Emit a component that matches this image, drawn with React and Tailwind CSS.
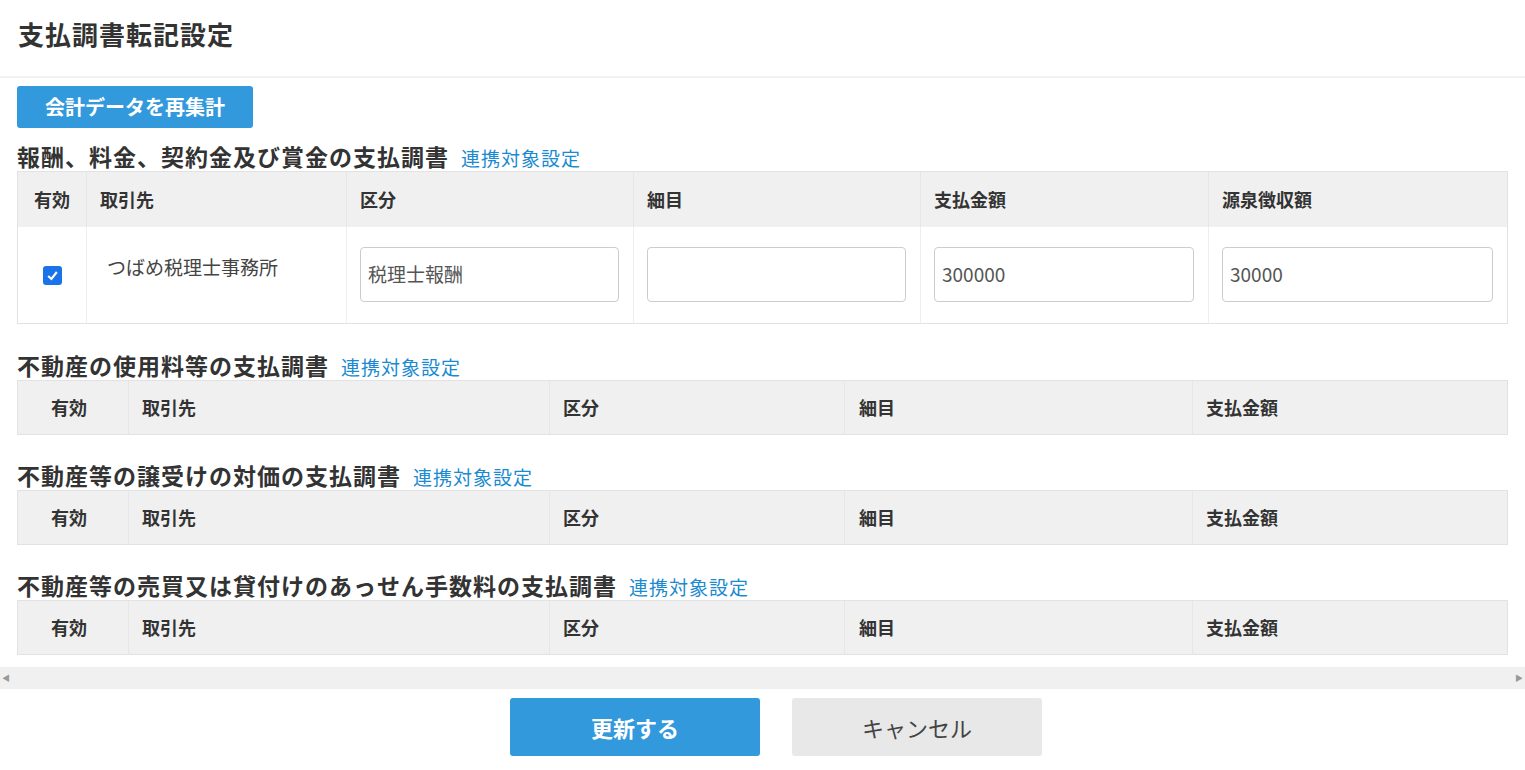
const F = { fontFamily: '"Noto Sans CJK JP", "Liberation Sans", sans-serif' };

function Head({ title, mt }) {
  return (
    <div className={`flex items-end h-[29px] ${mt}`}>
      <span className="text-[23px] font-bold text-[#333] leading-[30px] tracking-[1px]">{title}</span>
      <span className="ml-3 text-[19px] text-[#1a8ad1] leading-[26px] tracking-[1px]">連携対象設定</span>
    </div>
  );
}

function SmallTable() {
  const cols = [
    ['w-[110px] pl-[33px]', '有効'],
    ['w-[421px] pl-[13px]', '取引先'],
    ['w-[295px] pl-[13px]', '区分'],
    ['w-[348px] pl-[14px]', '細目'],
    ['flex-1 pl-[13px]', '支払金額'],
  ];
  return (
    <div className="mx-[17px] flex h-[55px] bg-[#f0f0f0] border border-[#e2e2e2]">
      {cols.map(([c, t], i) => (
        <div key={i} className={`${c} flex items-center text-[18px] font-bold text-[#333] ${i ? 'border-l border-[#e6e6e6]' : ''}`}>{t}</div>
      ))}
    </div>
  );
}

export default function App() {
  const ws = ['w-[68px] justify-center', 'w-[260px] pl-[13px]', 'w-[287px] pl-[13px]', 'w-[287px] pl-[13px]', 'w-[288px] pl-[13px]', 'flex-1 pl-[13px]'];
  const hd = ['有効', '取引先', '区分', '細目', '支払金額', '源泉徴収額'];
  const inputs = ['税理士報酬', '', '300000', '30000'];
  return (
    <div style={F} className="w-[1525px] h-[770px] bg-white text-[#333] overflow-hidden">
      <div className="h-[78px] border-b-2 border-[#f2f2f2] px-[18px] pt-[14px] text-[26px] font-bold tracking-[1px]">支払調書転記設定</div>
      <div className="px-[17px] pt-[8px]">
        <button className="w-[236px] h-[42px] bg-[#3399dd] rounded-[3px] text-white text-[20px] font-bold">会計データを再集計</button>
      </div>
      <div className="px-[17px]"><Head title="報酬、料金、契約金及び賞金の支払調書" mt="mt-[14px]" /></div>
      <div className="mx-[17px] border border-[#e2e2e2]">
        <div className="flex h-[55px] bg-[#f0f0f0]">
          {hd.map((t, i) => (
            <div key={i} className={`${ws[i]} flex items-center text-[18px] font-bold ${i ? 'border-l border-[#e6e6e6]' : ''}`}>{t}</div>
          ))}
        </div>
        <div className="flex h-[96px]">
          <div className={`${ws[0]} flex items-center`}>
            <div className="w-[19px] h-[19px] rounded-[3px] bg-[#1a73e8] flex items-center justify-center">
              <svg width="13" height="13" viewBox="0 0 12 12"><path d="M2 6.5 L5 9.2 L10 2.8" stroke="white" strokeWidth="2" fill="none" /></svg>
            </div>
          </div>
          <div className={`${ws[1]} border-l border-[#eee] pt-[26px] pl-[20px] text-[19px] text-[#444]`}>つばめ税理士事務所</div>
          {inputs.map((v, i) => (
            <div key={i} className={`${ws[i + 2]} border-l border-[#eee] pt-[20px] pr-[14px]`}>
              <div className="h-[55px] border border-[#ccc] rounded-[4px] flex items-center px-[7px] text-[19px] text-[#555]">{v}</div>
            </div>
          ))}
        </div>
      </div>
      <div className="px-[17px]"><Head title="不動産の使用料等の支払調書" mt="mt-[27px]" /></div>
      <SmallTable />
      <div className="px-[17px]"><Head title="不動産等の譲受けの対価の支払調書" mt="mt-[26px]" /></div>
      <SmallTable />
      <div className="px-[17px]"><Head title="不動産等の売買又は貸付けのあっせん手数料の支払調書" mt="mt-[26px]" /></div>
      <SmallTable />
      <div className="mt-[12px] h-[22px] bg-[#f0f0f0] flex items-center justify-between px-[2px] text-[8px] text-[#999]">
        <span>◀</span><span>▶</span>
      </div>
      <div className="flex justify-center gap-[32px] mt-[9px] pr-[3px] pl-[30px]">
        <button className="w-[250px] h-[58px] bg-[#3399dd] rounded-[3px] text-white text-[22px] font-bold">更新する</button>
        <button className="w-[250px] h-[58px] bg-[#e8e8e8] rounded-[3px] text-[#444] text-[22px]">キャンセル</button>
      </div>
    </div>
  );
}
